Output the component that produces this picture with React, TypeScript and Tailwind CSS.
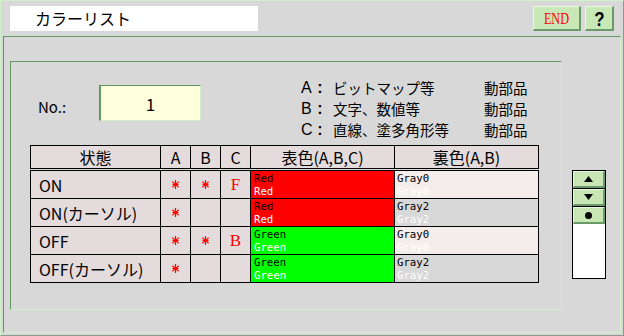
import React from "react";

const rows = [
  { label: "ON", a: true, b: true, c: "F", fg: "Red", fgBg: "bg-[#ff0000]", bk: "Gray0", bkBg: "bg-[#f5ecec]" },
  { label: "ON(カーソル)", a: true, b: false, c: "", fg: "Red", fgBg: "bg-[#ff0000]", bk: "Gray2", bkBg: "bg-[#d8d8d8]" },
  { label: "OFF", a: true, b: true, c: "B", fg: "Green", fgBg: "bg-[#00ff00]", bk: "Gray0", bkBg: "bg-[#f5ecec]" },
  { label: "OFF(カーソル)", a: true, b: false, c: "", fg: "Green", fgBg: "bg-[#00ff00]", bk: "Gray2", bkBg: "bg-[#d8d8d8]" },
];

function Star() {
  return (
    <svg width="7" height="9" viewBox="0 0 7 9" className="block">
      <g stroke="#ff0000" strokeWidth="1.2" fill="none">
        <line x1="3.5" y1="0" x2="3.5" y2="9" />
        <line x1="0.3" y1="1.8" x2="6.7" y2="7.2" />
        <line x1="0.3" y1="7.2" x2="6.7" y2="1.8" />
        <line x1="0.5" y1="4.5" x2="6.5" y2="4.5" />
      </g>
    </svg>
  );
}

const cell = "border-r border-b border-black flex items-center";
const grid = "grid grid-cols-[130px_30px_30px_30px_144px_144px] border-l border-t border-black w-[509px]";
const small = "pt-[2px] font-['DejaVu_Sans_Mono',monospace] text-[10.7px] leading-[12.5px]";
const lat = "font-['Liberation_Sans',sans-serif]";

function ScrollBtn({ children, last }: { children: React.ReactNode; last?: boolean }) {
  return (
    <div className={last ? "h-[17px]" : "h-[18px] border-b border-black"}>
      <div className="h-full bg-[#c8e6b4] border-t border-l border-t-[#eaf8e0] border-l-[#eaf8e0] border-r-2 border-b-2 border-r-[#6a9a6a] border-b-[#6a9a6a] flex items-center justify-center">
        {children}
      </div>
    </div>
  );
}

const legend = [
  ["A", "ビットマップ等"],
  ["B", "文字、数値等"],
  ["C", "直線、塗多角形等"],
];

export default function App() {
  return (
    <div className="w-[624px] h-[336px] bg-[#d8d8d8] border border-t-[#d0f0c8] border-l-[#d0f0c8] border-r-[#8a9a8a] border-b-[#8a9a8a] flex flex-col overflow-hidden font-['Noto_Sans_CJK_JP',sans-serif] text-black">
      {/* top bar */}
      <div className="h-[35px] flex items-start shrink-0">
        <div className="ml-[9px] mt-[5px] w-[248px] h-[25px] bg-white pl-[25px] text-[16px] leading-[25px]">
          カラーリスト
        </div>
        <div className="ml-auto mt-[5px] w-[48px] h-[25px] bg-[#c8e8b8] border-t border-l border-t-[#eaf8e0] border-l-[#eaf8e0] border-r-2 border-b-2 border-r-[#6a9a6a] border-b-[#6a9a6a] flex items-center justify-center">
          <span className="inline-block scale-x-[0.72] font-['Liberation_Serif',serif] text-[17px] leading-none text-[#ff0000]">END</span>
        </div>
        <div className="ml-[4px] mr-[9px] mt-[5px] w-[29px] h-[25px] bg-[#c8e8b8] border-t border-l border-t-[#eaf8e0] border-l-[#eaf8e0] border-r-2 border-b-2 border-r-[#6a9a6a] border-b-[#6a9a6a] flex items-center justify-center">
          <span className="inline-block scale-x-[0.8] font-['Liberation_Sans',sans-serif] font-bold text-[21px] leading-none">?</span>
        </div>
      </div>

      {/* outer panel */}
      <div className="flex-1 mx-[2px] mb-[2px] border border-t-[#609860] border-l-[#609860] border-r-[#d0f0c8] border-b-[#d0f0c8] flex items-start">
        {/* inner panel */}
        <div className="ml-[6px] mt-[24px] w-[552px] h-[249px] border border-t-[#609860] border-l-[#609860] border-r-[#d0f0c8] border-b-[#d0f0c8] flex flex-col">
          <div className="h-[83px] flex items-start pl-[27px] shrink-0">
            <div className="w-[61px] mt-[35px] h-[20px] leading-[20px] text-[15px]">No.:</div>
            <div className="mt-[23px] w-[102px] h-[36px] bg-[#ffffde] border-t border-l-2 border-t-[#609860] border-l-[#609860] border-r border-b border-r-[#d0f0c8] border-b-[#d0f0c8] flex items-center justify-center text-[17px] leading-none">
              1
            </div>
            <div className="ml-[100px] mt-[15px] flex flex-col">
              {legend.map(([k, t]) => (
                <div key={k} className="flex h-[21px] items-center">
                  <span className={`${lat} w-[12px] text-[16px] leading-[18px]`}>{k}</span>
                  <span className={`${lat} w-[14px] text-center font-bold text-[16px] leading-[18px]`}>:</span>
                  <span className="w-[157px] pl-[6px] text-[14.5px] leading-[21px]">{t}</span>
                  <span className="text-[14.5px] leading-[21px]">動部品</span>
                </div>
              ))}
            </div>
          </div>

          {/* table */}
          <div className="ml-[19px]">
            <div className={`${grid} bg-[#e4dcdc] text-[16px] leading-none`}>
              <div className={`${cell} justify-center h-[23px]`}>状態</div>
              <div className={`${cell} justify-center h-[23px]`}>A</div>
              <div className={`${cell} justify-center h-[23px]`}>B</div>
              <div className={`${cell} justify-center h-[23px]`}>C</div>
              <div className={`${cell} justify-center h-[23px]`}>表色(A,B,C)</div>
              <div className={`${cell} justify-center h-[23px]`}>裏色(A,B)</div>
            </div>
            <div className={`${grid} mt-[1px] text-[16px] leading-none`}>
              {rows.map((r) => (
                <React.Fragment key={r.label}>
                  <div className={`${cell} h-[28px] bg-[#e4dcdc] pl-[8px]`}>{r.label}</div>
                  <div className={`${cell} h-[28px] bg-[#e4dcdc] justify-center`}>{r.a && <Star />}</div>
                  <div className={`${cell} h-[28px] bg-[#e4dcdc] justify-center`}>{r.b && <Star />}</div>
                  <div className={`${cell} h-[28px] bg-[#e4dcdc] justify-center font-['Liberation_Serif',serif] text-[17px] text-[#ff0000]`}>{r.c}</div>
                  <div className={`border-r border-b border-black h-[28px] overflow-hidden ${r.fgBg} pl-[3px] ${small}`}>
                    <div className="text-black">{r.fg}</div>
                    <div className="text-white">{r.fg}</div>
                  </div>
                  <div className={`border-r border-b border-black h-[28px] overflow-hidden ${r.bkBg} pl-[2px] ${small}`}>
                    <div className="text-black">{r.bk}</div>
                    <div className="text-white">{r.bk}</div>
                  </div>
                </React.Fragment>
              ))}
            </div>
          </div>
        </div>

        {/* scroll widget */}
        <div className="ml-[10px] mt-[133px] w-[34px] h-[109px] border border-black bg-white flex flex-col">
          <ScrollBtn>
            <svg width="9" height="6" viewBox="0 0 9 6"><polygon points="4.5,0 9,6 0,6" fill="black" /></svg>
          </ScrollBtn>
          <ScrollBtn>
            <svg width="9" height="6" viewBox="0 0 9 6"><polygon points="0,0 9,0 4.5,6" fill="black" /></svg>
          </ScrollBtn>
          <ScrollBtn last>
            <svg width="7" height="7" viewBox="0 0 7 7"><circle cx="3.5" cy="3.5" r="3.5" fill="black" /></svg>
          </ScrollBtn>
        </div>
      </div>
    </div>
  );
}
